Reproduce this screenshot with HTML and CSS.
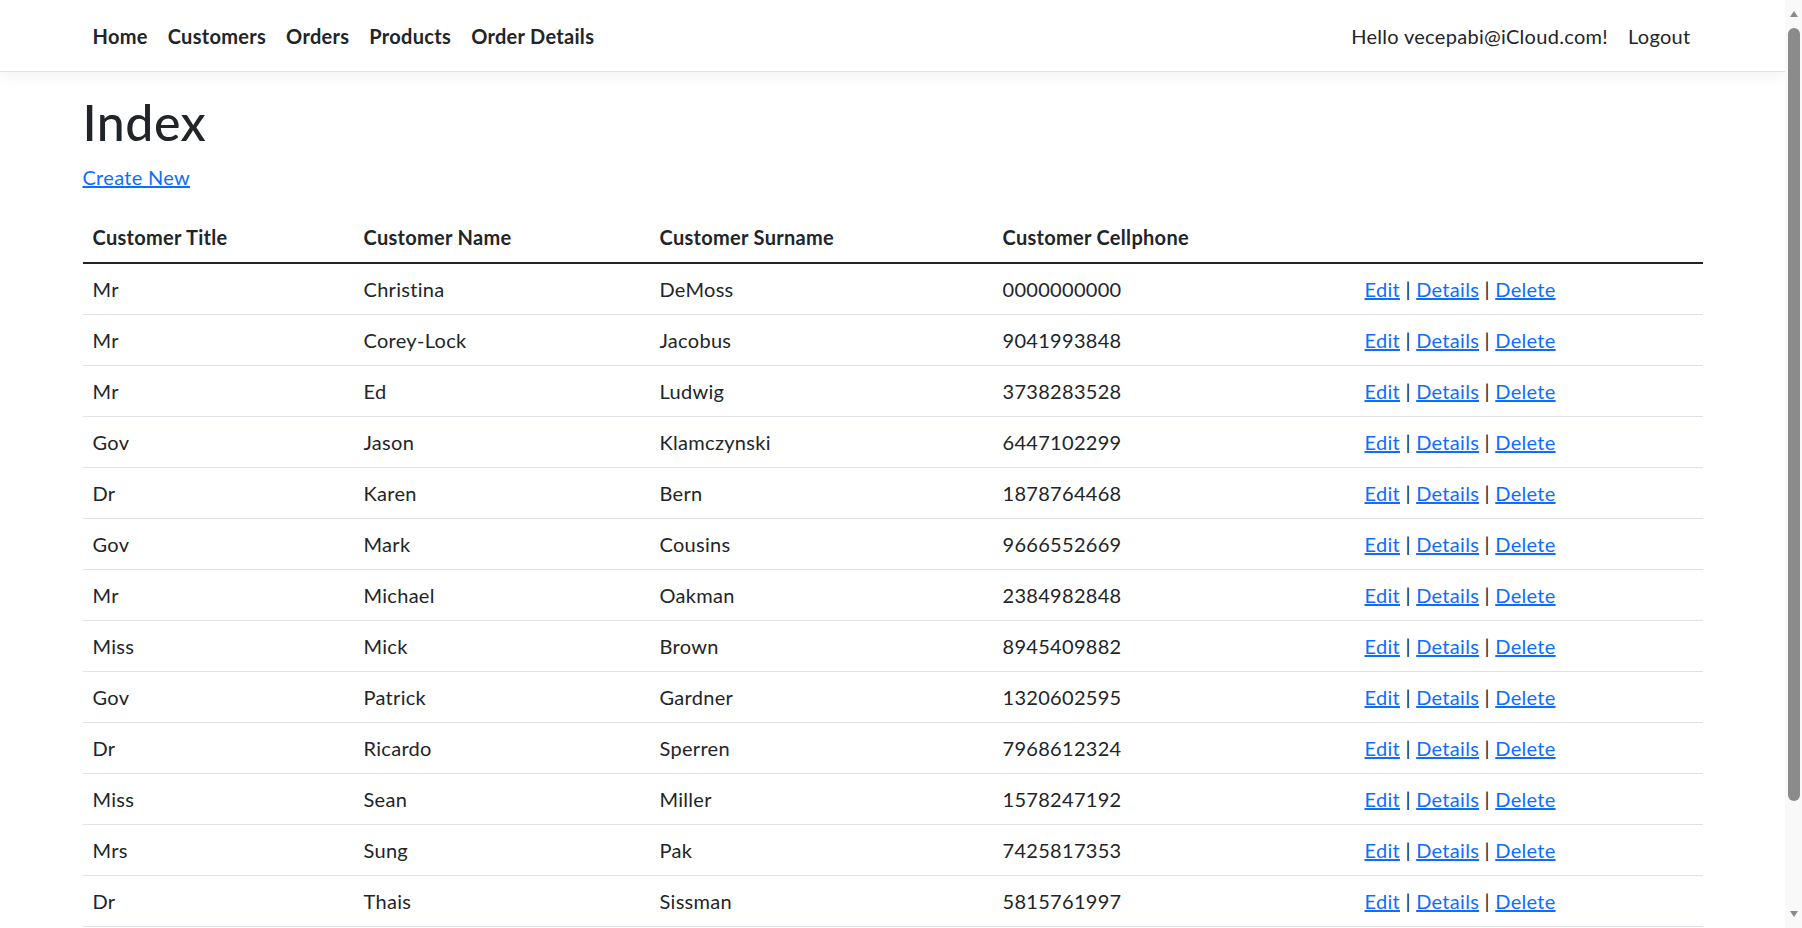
FILE: index.html
```html
<!DOCTYPE html>
<html lang="en">
<head>
<meta charset="utf-8">
<title>Index</title>
<link rel="stylesheet" href="styles.css">
</head>
<body>
<div class="page">
  <header class="navbar">
    <div class="container nav-inner">
      <ul class="nav-list">
        <li><a class="nav-link" href="#">Home</a></li>
        <li><a class="nav-link" href="#">Customers</a></li>
        <li><a class="nav-link" href="#">Orders</a></li>
        <li><a class="nav-link" href="#">Products</a></li>
        <li><a class="nav-link" href="#">Order Details</a></li>
      </ul>
      <ul class="nav-right">
        <li><span class="nav-text">Hello vecepabi@iCloud.com!</span></li>
        <li><button class="logout" type="button">Logout</button></li>
      </ul>
    </div>
  </header>
  <main class="container main">
    <h1 class="title">Index</h1>
    <p class="create"><a href="#">Create New</a></p>
    <table class="table">
      <colgroup>
        <col class="c1"><col class="c2"><col class="c3"><col class="c4"><col class="c5">
      </colgroup>
      <thead>
        <tr><th>Customer Title</th><th>Customer Name</th><th>Customer Surname</th><th>Customer Cellphone</th><th></th></tr>
      </thead>
      <tbody>
        <tr><td>Mr</td><td>Christina</td><td>DeMoss</td><td>0000000000</td><td><a href="#">Edit</a> | <a href="#">Details</a> | <a href="#">Delete</a></td></tr>
        <tr><td>Mr</td><td>Corey-Lock</td><td>Jacobus</td><td>9041993848</td><td><a href="#">Edit</a> | <a href="#">Details</a> | <a href="#">Delete</a></td></tr>
        <tr><td>Mr</td><td>Ed</td><td>Ludwig</td><td>3738283528</td><td><a href="#">Edit</a> | <a href="#">Details</a> | <a href="#">Delete</a></td></tr>
        <tr><td>Gov</td><td>Jason</td><td>Klamczynski</td><td>6447102299</td><td><a href="#">Edit</a> | <a href="#">Details</a> | <a href="#">Delete</a></td></tr>
        <tr><td>Dr</td><td>Karen</td><td>Bern</td><td>1878764468</td><td><a href="#">Edit</a> | <a href="#">Details</a> | <a href="#">Delete</a></td></tr>
        <tr><td>Gov</td><td>Mark</td><td>Cousins</td><td>9666552669</td><td><a href="#">Edit</a> | <a href="#">Details</a> | <a href="#">Delete</a></td></tr>
        <tr><td>Mr</td><td>Michael</td><td>Oakman</td><td>2384982848</td><td><a href="#">Edit</a> | <a href="#">Details</a> | <a href="#">Delete</a></td></tr>
        <tr><td>Miss</td><td>Mick</td><td>Brown</td><td>8945409882</td><td><a href="#">Edit</a> | <a href="#">Details</a> | <a href="#">Delete</a></td></tr>
        <tr><td>Gov</td><td>Patrick</td><td>Gardner</td><td>1320602595</td><td><a href="#">Edit</a> | <a href="#">Details</a> | <a href="#">Delete</a></td></tr>
        <tr><td>Dr</td><td>Ricardo</td><td>Sperren</td><td>7968612324</td><td><a href="#">Edit</a> | <a href="#">Details</a> | <a href="#">Delete</a></td></tr>
        <tr><td>Miss</td><td>Sean</td><td>Miller</td><td>1578247192</td><td><a href="#">Edit</a> | <a href="#">Details</a> | <a href="#">Delete</a></td></tr>
        <tr><td>Mrs</td><td>Sung</td><td>Pak</td><td>7425817353</td><td><a href="#">Edit</a> | <a href="#">Details</a> | <a href="#">Delete</a></td></tr>
        <tr><td>Dr</td><td>Thais</td><td>Sissman</td><td>5815761997</td><td><a href="#">Edit</a> | <a href="#">Details</a> | <a href="#">Delete</a></td></tr>
      </tbody>
    </table>
  </main>
</div>
<div class="scrollbar" aria-hidden="true">
  <span class="sb-arrow sb-up"></span>
  <span class="sb-thumb"></span>
  <span class="sb-arrow sb-down"></span>
</div>
</body>
</html>
```
FILE: styles.css
```css
body {
  margin: 0;
  display: flex;
  align-items: flex-start;
  font-family: "Lato", "Liberation Sans", sans-serif;
  font-size: 20px;
  line-height: 1.5;
  letter-spacing: 0.3px;
  color: #212529;
  background: #fff;
}

.page {
  flex: 1;
  min-width: 0;
  padding-bottom: 160px;
}

/* window scrollbar */
.scrollbar {
  flex: 0 0 17px;
  width: 17px;
  height: 100vh;
  position: sticky;
  top: 0;
  display: flex;
  flex-direction: column;
  align-items: center;
  background: #f9f9f9;
}
.sb-arrow {
  width: 0;
  height: 0;
  border-left: 4.5px solid transparent;
  border-right: 4.5px solid transparent;
}
.sb-up {
  margin-top: 11px;
  border-bottom: 6px solid #8a8a8a;
}
.sb-thumb {
  margin-top: 11px;
  width: 12px;
  height: 773px;
  border-radius: 6px;
  background: #8b8b8b;
}
.sb-down {
  margin-top: auto;
  margin-bottom: 11px;
  border-top: 6px solid #8a8a8a;
}

.container {
  max-width: 1650px;
  margin: 0 auto;
  padding: 0 15px;
  box-sizing: border-box;
}

.navbar {
  height: 71px;
  background: #fff;
  border-bottom: 1px solid #dee2e6;
  box-shadow: 0 5px 15px rgba(0, 0, 0, 0.05);
  margin-bottom: 20px;
}
.nav-inner {
  height: 100%;
  display: flex;
  align-items: center;
  justify-content: space-between;
}
.nav-list, .nav-right {
  list-style: none;
  margin: 0;
  padding: 0;
  display: flex;
  align-items: center;
}
.nav-link {
  display: block;
  padding: 10px;
  color: #212529;
  font-weight: 700;
  text-decoration: none;
}
.nav-text {
  display: block;
  padding: 10px;
  color: #212529;
}
.logout {
  font: inherit;
  letter-spacing: inherit;
  color: #212529;
  background: none;
  border: 0;
  padding: 10px 12px 10px 10px;
  cursor: pointer;
}

.title {
  margin: 0 0 10px;
  font-size: 50px;
  font-weight: 500;
  line-height: 1.2;
  letter-spacing: 0.5px;
}
.create {
  margin: 0 0 20px;
}
a {
  color: #0d6efd;
  text-decoration: underline;
}

.table {
  width: 100%;
  border-collapse: collapse;
  table-layout: fixed;
  margin-bottom: 20px;
}
.c1 { width: 271px; }
.c2 { width: 296px; }
.c3 { width: 343px; }
.c4 { width: 362px; }
.c5 { width: auto; }

.table th {
  text-align: left;
  font-weight: 700;
  padding: 10px;
  border-bottom: 2px solid #212529;
}
.table td {
  padding: 10px;
  border-bottom: 1px solid #dee2e6;
}
```
